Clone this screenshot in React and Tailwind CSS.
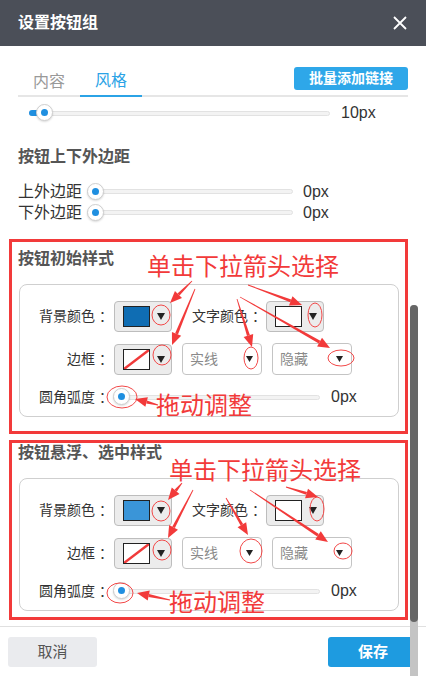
import React from "react"

const FONT = { fontFamily: '"Liberation Sans", "Noto Sans CJK SC", sans-serif' }

function Slider({ trackW, fill }) {
  return (
    <div className="relative flex h-[18px] items-center" style={{ width: trackW }}>
      <div className="h-[5px] w-full rounded-full border border-[#e2e2e2] bg-[#f3f3f3]" />
      {fill ? <div className="absolute left-0 top-[6px] h-[6px] w-[14px] rounded-l-full bg-[#1f8fe0]" /> : null}
      <div
        className={`absolute top-0 flex h-[17px] w-[17px] items-center justify-center rounded-full border border-[#cfcfcf] bg-white shadow-[0_1px_2px_rgba(0,0,0,0.15)] ${
          fill ? "left-[7px]" : "left-0"
        }`}
      >
        <div className="h-[7px] w-[7px] rounded-full bg-[#1f8fe0]" />
      </div>
    </div>
  )
}

function Tri({ w = 8, h = 7 }) {
  return (
    <svg width={w} height={h} viewBox={`0 0 ${w} ${h}`}>
      <polygon points={`0,0 ${w},0 ${w / 2},${h}`} fill="#222" />
    </svg>
  )
}

function Label({ text, className = "" }) {
  return (
    <div className={`flex items-center text-[14px] text-[#333] ${className}`}>
      <span>{text}</span>
      <span className="ml-[4px] w-[14px]">：</span>
    </div>
  )
}

function ColorPicker({ color, slash }) {
  return (
    <div className="flex h-[31px] w-[58px] items-center rounded-[4px] border border-[#bdbdbd] bg-[#ececec] pl-[8px]">
      <div
        className="relative h-[21px] w-[27px] overflow-hidden border border-[#222]"
        style={{ background: color }}
      >
        {slash ? (
          <svg className="absolute inset-0" width="25" height="19" viewBox="0 0 25 19">
            <line x1="0" y1="19" x2="25" y2="0" stroke="#f03a3a" strokeWidth="2.5" />
          </svg>
        ) : null}
      </div>
      <div className="ml-[7px] flex">
        <Tri />
      </div>
    </div>
  )
}

function Select({ text }) {
  return (
    <div className="flex h-[32px] w-[80px] items-center justify-between rounded-[4px] border border-[#c4c4c4] bg-white pl-[7px] pr-[8px]">
      <span className="text-[14px] text-[#8a8a8a]">{text}</span>
      <Tri w={7} h={6} />
    </div>
  )
}

function StyleBox({ swatch }) {
  return (
    <div className="ml-[7px] w-[380px] rounded-[8px] border border-[#cfcfcf] pb-[9px] pt-[16px]">
      <div className="flex items-center">
        <Label text="背景颜色" className="w-[93px] justify-end" />
        <div className="ml-[1px]">
          <ColorPicker color={swatch} />
        </div>
        <Label text="文字颜色" className="ml-[20px]" />
        <ColorPicker color="#fff" />
      </div>
      <div className="mt-[11px] flex items-center">
        <Label text="边框" className="w-[93px] justify-end" />
        <div className="ml-[1px]">
          <ColorPicker color="#fff" slash />
        </div>
        <div className="ml-[10px]">
          <Select text="实线" />
        </div>
        <div className="ml-[10px]">
          <Select text="隐藏" />
        </div>
      </div>
      <div className="mt-[12px] flex h-[20px] items-center">
        <Label text="圆角弧度" className="w-[93px] justify-end" />
        <Slider trackW={207} />
        <span className="ml-[11px] text-[16px] text-[#333]">0px</span>
      </div>
    </div>
  )
}

function Arrow({ x1, y1, x2, y2 }) {
  const dx = x2 - x1
  const dy = y2 - y1
  const len = Math.hypot(dx, dy)
  const ux = dx / len
  const uy = dy / len
  const px = -uy
  const py = ux
  const hl = 12
  const hw = 5
  const bx = x2 - ux * hl
  const by = y2 - uy * hl
  const shaft = [
    [x1 + px * 0.4, y1 + py * 0.4],
    [bx + px * 1.5, by + py * 1.5],
    [bx - px * 1.5, by - py * 1.5],
    [x1 - px * 0.4, y1 - py * 0.4],
  ]
  const head = [
    [x2, y2],
    [bx + px * hw, by + py * hw],
    [bx - px * hw, by - py * hw],
  ]
  const pts = (a) => a.map((p) => p.join(",")).join(" ")
  return (
    <g fill="#f23a3a">
      <polygon points={pts(shaft)} />
      <polygon points={pts(head)} />
    </g>
  )
}

const ARROWS = [
  [192, 281, 170, 303],
  [195, 289, 172, 345],
  [237, 299, 252, 347],
  [248, 285, 302, 305],
  [240, 297, 330, 348],
  [158, 405, 135, 399],
  [182, 483, 168, 500],
  [193, 490, 168, 538],
  [286, 487, 318, 497],
  [226, 498, 248, 535],
  [250, 490, 328, 542],
  [170, 600, 137, 593],
]

const ELLIPSES = [
  [161, 315, 9, 10],
  [162, 355, 9, 10],
  [315, 315, 7, 12],
  [251, 358, 7, 11],
  [341, 358, 13, 8],
  [122, 397, 15, 11],
  [161, 511, 9, 10],
  [162, 550, 9, 10],
  [317, 509, 7, 12],
  [251, 551, 11, 12],
  [343, 551, 9, 8],
  [120, 593, 13, 10],
]

function Annotations() {
  return (
    <>
      <svg className="pointer-events-none absolute left-0 top-0" width="426" height="676">
        {ELLIPSES.map(([cx, cy, rx, ry], i) => (
          <ellipse key={i} cx={cx} cy={cy} rx={rx} ry={ry} fill="none" stroke="#f24848" strokeWidth="1" />
        ))}
        {ARROWS.map(([a, b, c, d], i) => (
          <Arrow key={i} x1={a} y1={b} x2={c} y2={d} />
        ))}
      </svg>
      <span className="absolute left-[147px] top-[252px] text-[24px] leading-[30px] text-[#f23a3a]">单击下拉箭头选择</span>
      <span className="absolute left-[156px] top-[391px] text-[24px] leading-[30px] text-[#f23a3a]">拖动调整</span>
      <span className="absolute left-[169px] top-[456px] text-[24px] leading-[30px] text-[#f23a3a]">单击下拉箭头选择</span>
      <span className="absolute left-[169px] top-[588px] text-[24px] leading-[30px] text-[#f23a3a]">拖动调整</span>
    </>
  )
}

export default function App() {
  return (
    <div className="relative flex h-[676px] w-[426px] flex-col overflow-hidden bg-white" style={FONT}>
      <div className="flex h-[46px] shrink-0 items-center justify-between bg-[#4b4f58] pl-[18px] pr-[19px]">
        <span className="text-[16px] font-bold text-white">设置按钮组</span>
        <svg width="14" height="14" viewBox="0 0 14 14">
          <path d="M1 1L13 13M13 1L1 13" stroke="#fff" strokeWidth="1.8" />
        </svg>
      </div>

      <div className="mt-[21px] flex h-[30px] shrink-0 items-stretch justify-between pl-[18px] pr-[18px]">
        <div className="flex flex-1 items-end border-b-2 border-[#e6e6e6]">
          <div className="mb-[-2px] flex">
            <div className="flex h-[32px] w-[62px] items-center justify-center pt-[2px] text-[16px] text-[#999]">内容</div>
            <div className="flex h-[32px] w-[62px] items-center justify-center border-b-2 border-[#2ba3e6] pt-[2px] text-[16px] text-[#2ba3e6]">
              风格
            </div>
          </div>
        </div>
        <div className="absolute right-[18px] top-[67px] flex h-[23px] w-[114px] items-center justify-center rounded-[3px] bg-[#2ea7e9] text-[14px] font-bold text-white">
          批量添加链接
        </div>
      </div>

      <div className="flex h-[529px] shrink-0">
        <div className="w-[410px] overflow-hidden">
          <div className="flex h-[32px] items-center pl-[29px]">
            <Slider trackW={301} fill />
            <span className="ml-[11px] text-[16px] text-[#333]">10px</span>
          </div>
          <div className="mt-[16px] flex h-[24px] items-center pl-[18px] text-[16px] font-bold text-[#555]">按钮上下外边距</div>
          <div className="mt-[12px] flex h-[21px] items-center pl-[18px]">
            <span className="text-[16px] leading-[21px] text-[#333]">上外边距</span>
            <div className="ml-[5px]">
              <Slider trackW={206} />
            </div>
            <span className="ml-[10px] text-[16px] text-[#333]">0px</span>
          </div>
          <div className="flex h-[21px] items-center pl-[18px]">
            <span className="text-[16px] leading-[21px] text-[#333]">下外边距</span>
            <div className="ml-[5px]">
              <Slider trackW={206} />
            </div>
            <span className="ml-[10px] text-[16px] text-[#333]">0px</span>
          </div>

          <div className="ml-[9px] mt-[16px] w-[399px] border-[3px] border-[#f23a3a] pb-[14px]">
            <div className="mt-[5px] flex h-[24px] items-center pl-[6px] text-[16px] font-bold text-[#555]">按钮初始样式</div>
            <div className="mt-[13px]">
              <StyleBox swatch="#0f6db3" />
            </div>
          </div>

          <div className="ml-[9px] mt-[6px] w-[399px] border-[3px] border-[#f23a3a] pb-[6px]">
            <div className="flex h-[20px] items-center pl-[6px] text-[16px] font-bold text-[#555]">按钮悬浮、选中样式</div>
            <div className="mt-[15px]">
              <StyleBox swatch="#3a95d8" />
            </div>
          </div>
        </div>
        <div className="relative w-[8px]">
          <div className="h-[525px] w-[8px] rounded-full bg-[#c4c4c4]">
            <div className="mt-[208px] h-[317px] w-[8px] rounded-full bg-[#666]" />
          </div>
        </div>
      </div>

      <div className="flex flex-1 items-start justify-between border-t border-[#e0e0e0] pl-[8px] pr-[8px] pt-[10px]">
        <div className="flex h-[30px] w-[89px] items-center justify-center rounded-[3px] bg-[#eaebee] text-[15px] text-[#555]">取消</div>
        <div className="flex h-[30px] w-[90px] items-center justify-center rounded-[3px] bg-[#1e9be0] text-[15px] font-bold text-white">保存</div>
      </div>

      <Annotations />
    </div>
  )
}
